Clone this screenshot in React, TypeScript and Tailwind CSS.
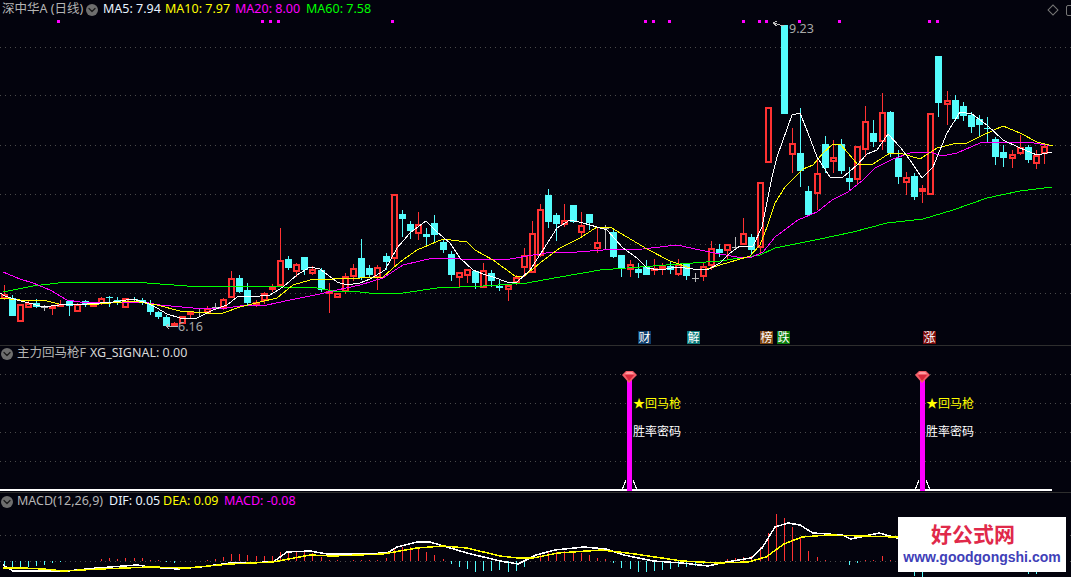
import { ChevronDown } from "lucide-react";

type Kind = "up" | "down" | "cross" | "grey";
type Candle = [number, number, number, number, Kind] | null;
type Point = [number, number];

const BG = "#03030d";
const RED = "#ff3232";
const CYAN = "#54fcfc";

// [body top, body bottom, wick top, wick bottom, kind]
const CANDLES: Candle[] = [
  [294, 298, 285, 300, "up"],
  [298, 316, 295, 316, "down"],
  [304, 321, 304, 321, "up"],
  [303, 307, 301, 308, "up"],
  [303, 307, 299, 308, "down"],
  [307, 307, 305, 311, "grey"],
  [306, 308, 305, 315, "up"],
  [304, 305, 300, 307, "up"],
  [301, 306, 300, 316, "down"],
  [304, 311, 303, 312, "up"],
  [301, 305, 300, 307, "down"],
  [304, 305, 303, 307, "up"],
  [298, 303, 297, 305, "up"],
  [297, 298, 296, 307, "down"],
  [300, 302, 297, 305, "down"],
  [298, 307, 298, 307, "up"],
  [299, 300, 297, 302, "down"],
  [300, 302, 298, 305, "down"],
  [304, 312, 300, 315, "down"],
  [312, 317, 311, 319, "down"],
  [317, 326, 315, 327, "down"],
  [323, 326, 322, 327, "up"],
  [316, 323, 316, 324, "up"],
  [312, 313, 312, 318, "up"],
  [312, 312, 308, 316, "grey"],
  [308, 312, 306, 313, "up"],
  [307, 307, 303, 310, "grey"],
  [299, 307, 298, 310, "up"],
  [278, 297, 271, 298, "up"],
  [278, 292, 275, 293, "down"],
  [290, 303, 283, 305, "down"],
  [302, 303, 300, 307, "up"],
  [293, 300, 292, 304, "up"],
  [286, 289, 284, 292, "up"],
  [260, 285, 228, 287, "up"],
  [259, 268, 256, 270, "down"],
  [264, 271, 263, 277, "up"],
  [257, 270, 257, 275, "down"],
  [269, 273, 266, 275, "up"],
  [270, 290, 268, 292, "down"],
  [291, 293, 283, 313, "up"],
  [293, 297, 293, 298, "up"],
  [276, 291, 273, 294, "up"],
  [268, 276, 264, 281, "up"],
  [258, 278, 239, 280, "down"],
  [268, 275, 265, 277, "down"],
  [267, 277, 265, 290, "up"],
  [256, 262, 253, 270, "down"],
  [194, 258, 194, 267, "up"],
  [214, 219, 210, 237, "down"],
  [224, 231, 221, 239, "down"],
  [224, 233, 212, 240, "up"],
  [234, 237, 228, 245, "down"],
  [223, 235, 215, 243, "down"],
  [242, 250, 239, 253, "down"],
  [254, 275, 251, 281, "down"],
  [272, 277, 272, 287, "up"],
  [269, 275, 269, 283, "up"],
  [271, 283, 270, 289, "down"],
  [270, 287, 263, 287, "up"],
  [273, 281, 270, 287, "down"],
  [286, 288, 279, 291, "down"],
  [285, 289, 285, 301, "up"],
  [277, 282, 275, 285, "up"],
  [255, 267, 248, 277, "up"],
  [233, 272, 221, 273, "up"],
  [209, 255, 204, 257, "up"],
  [195, 222, 189, 228, "down"],
  [215, 224, 213, 241, "down"],
  [220, 224, 204, 227, "up"],
  [205, 222, 205, 223, "down"],
  [225, 232, 212, 238, "up"],
  [214, 223, 214, 230, "down"],
  [242, 248, 227, 253, "up"],
  [228, 228, 225, 249, "grey"],
  [232, 257, 230, 258, "down"],
  [255, 269, 255, 277, "down"],
  [264, 269, 260, 277, "up"],
  [269, 273, 263, 278, "down"],
  [266, 275, 260, 275, "down"],
  [268, 270, 259, 275, "up"],
  [265, 268, 263, 275, "up"],
  [266, 270, 262, 274, "down"],
  [264, 274, 259, 276, "up"],
  [264, 276, 263, 280, "down"],
  [278, 278, 273, 282, "grey"],
  [266, 276, 263, 281, "up"],
  [248, 265, 241, 270, "up"],
  [249, 253, 244, 257, "down"],
  [244, 250, 244, 260, "up"],
  [247, 247, 237, 250, "grey"],
  [233, 244, 218, 245, "up"],
  [237, 250, 234, 255, "down"],
  [182, 247, 182, 254, "up"],
  [107, 162, 107, 163, "up"],
  null,
  [25, 114, 25, 114, "down"],
  [143, 154, 128, 173, "up"],
  [153, 171, 108, 187, "down"],
  [191, 215, 186, 215, "down"],
  [173, 193, 157, 210, "up"],
  [144, 168, 136, 173, "down"],
  [157, 161, 140, 173, "up"],
  [144, 171, 139, 174, "down"],
  [178, 182, 167, 190, "down"],
  [146, 179, 146, 184, "up"],
  [121, 149, 106, 157, "up"],
  [133, 142, 120, 147, "down"],
  [112, 141, 93, 150, "up"],
  [112, 153, 111, 157, "down"],
  [158, 177, 150, 184, "down"],
  [177, 182, 172, 195, "up"],
  [176, 197, 173, 200, "down"],
  [188, 191, 185, 203, "up"],
  [113, 194, 113, 194, "up"],
  [56, 103, 56, 117, "down"],
  [100, 104, 91, 125, "up"],
  [100, 119, 95, 121, "down"],
  [106, 116, 102, 121, "down"],
  [115, 127, 112, 133, "down"],
  [119, 125, 115, 136, "down"],
  [128, 128, 117, 142, "cross"],
  [139, 157, 137, 165, "down"],
  [152, 158, 145, 167, "down"],
  [154, 158, 150, 168, "up"],
  [147, 153, 135, 155, "up"],
  [147, 160, 145, 163, "down"],
  [155, 163, 150, 169, "up"],
  [146, 153, 145, 164, "up"],
];

const MA5: Point[] = [
  [0, 293], [5, 296], [17, 300], [33, 304], [43, 307], [67, 304], [87, 304], [113, 302], [133, 299], [147, 303],
  [157, 308], [167, 314], [180, 318], [197, 318], [213, 310], [227, 305], [237, 297], [260, 296], [270, 295],
  [283, 287], [297, 275], [310, 267], [320, 269], [337, 282], [347, 285], [360, 283], [370, 279], [385, 270],
  [397, 248], [410, 233], [426, 221], [437, 232], [450, 243], [460, 258], [473, 270], [483, 274], [493, 277],
  [507, 282], [517, 282], [530, 270], [543, 250], [557, 228], [570, 220], [583, 223], [597, 227], [607, 230],
  [623, 248], [637, 258], [647, 268], [660, 270], [677, 267], [693, 269], [707, 270], [720, 263], [730, 253],
  [740, 246], [753, 246], [762, 227], [772, 177], [777, 157], [792, 115], [800, 113], [808, 133], [817, 157],
  [830, 177], [842, 178], [857, 165], [867, 154], [877, 150], [888, 134], [900, 147], [910, 160], [922, 178],
  [933, 167], [947, 133], [960, 112], [972, 114], [987, 125], [1003, 140], [1020, 148], [1037, 155], [1052, 152],
];

const MA10: Point[] = [
  [0, 298], [20, 300], [43, 300], [63, 305], [100, 304], [133, 301], [157, 305], [180, 311], [207, 313],
  [223, 313], [240, 307], [260, 302], [277, 298], [293, 285], [310, 280], [333, 279], [360, 278], [383, 277],
  [400, 262], [417, 250], [443, 239], [467, 242], [475, 250], [493, 260], [515, 276], [523, 277], [540, 263],
  [560, 248], [580, 238], [597, 227], [610, 227], [627, 237], [647, 249], [670, 261], [693, 269], [707, 269],
  [720, 265], [737, 260], [750, 256], [760, 245], [767, 227], [775, 203], [785, 187], [803, 169], [813, 165],
  [823, 153], [833, 144], [840, 144], [848, 153], [858, 165], [873, 164], [890, 153], [900, 153], [920, 159],
  [937, 148], [953, 144], [967, 143], [983, 135], [1003, 126], [1020, 133], [1037, 142], [1053, 146],
];

const MA20: Point[] = [
  [3, 272], [20, 279], [33, 283], [50, 290], [67, 300], [80, 302], [100, 302], [143, 302], [160, 305], [193, 308],
  [227, 308], [240, 306], [267, 305], [290, 300], [320, 294], [337, 290], [360, 285], [383, 278], [403, 265],
  [433, 258], [460, 259], [510, 259], [533, 255], [553, 252], [577, 252], [603, 250], [643, 249], [677, 245],
  [700, 250], [720, 254], [737, 257], [750, 258], [763, 252], [775, 237], [798, 220], [817, 212], [832, 200],
  [848, 192], [863, 180], [875, 168], [893, 159], [913, 152], [933, 153], [942, 156], [957, 153], [980, 143],
  [1003, 142], [1027, 142], [1053, 146],
];

const MA60: Point[] = [
  [3, 292], [33, 286], [67, 282], [133, 282], [187, 286], [260, 286], [283, 287], [317, 288], [333, 291],
  [360, 292], [377, 294], [403, 293], [437, 288], [483, 286], [527, 283], [560, 277], [600, 270], [640, 267],
  [693, 263], [720, 261], [740, 258], [760, 255], [775, 248], [820, 239], [853, 232], [887, 223], [923, 219],
  [953, 210], [987, 198], [1020, 191], [1052, 187],
];

const DIF: Point[] = [
  [3, 565], [13, 571], [43, 571], [67, 571], [97, 568], [137, 565], [150, 567], [177, 569], [200, 567], [230, 563],
  [273, 562], [287, 552], [310, 551], [327, 554], [350, 554], [387, 553], [397, 547], [417, 542], [430, 542],
  [447, 547], [467, 553], [500, 561], [518, 564], [536, 555], [555, 550], [584, 547], [606, 549], [624, 555],
  [653, 561], [682, 563], [708, 566], [726, 562], [751, 558], [762, 548], [775, 527], [788, 523], [800, 525],
  [813, 533], [842, 535], [851, 539], [879, 533], [897, 538], [920, 536],
];

const DEA: Point[] = [
  [3, 568], [23, 568], [43, 569], [63, 571], [100, 569], [150, 567], [187, 568], [230, 564], [273, 562], [310, 555],
  [333, 556], [383, 554], [417, 548], [443, 546], [467, 548], [500, 556], [518, 558], [533, 558], [558, 553],
  [602, 550], [635, 554], [682, 561], [718, 563], [748, 562], [766, 557], [784, 544], [802, 537], [828, 535],
  [897, 537], [920, 537],
];

// height of each histogram bar in px, + red above zero, - cyan below
const MACD_BARS = [
  -6, -6, -6, -6, -5, -4, -2, -1, 0, 0, 0, 0, 2, 3, 2, 3, 3, 3, 1, 1, -1, -2, 0, 0, 0, 1, 2, 4, 7, 7, 6, 5, 5, 5, 9,
  10, 10, 9, 8, 4, 1, 1, 0, 1, 1, 1, 1, 3, 12, 14, 14, 12, 9, 6, 2, -3, -6, -8, -11, -10, -10, -9, -11, -10, -6, 0,
  6, 9, 9, 10, 9, 8, 6, 3, 2, -2, -7, -8, -11, -11, -10, -9, -8, -6, -6, -5, -3, 0, 0, 2, 3, 4, 5, 14, 28, 47, 43,
  34, 24, 10, 4, 1, 0, 0, -4, -2, 1, 1, 5, 1, -5, -10, -15, -16, -10, 0, 0, 0, 0, 0, 0, 0, 0, 0, 0, 0, -13, -13,
];

const SIGNAL_DOTS = [58, 262, 270, 278, 392, 645, 653, 669, 743, 759, 766, 799, 839, 929, 937];
const PRICE_GRID = [47, 95, 145, 194, 244, 293];
const SIGNAL_GRID = [374, 403, 432, 461];
const MACD_GRID = [535, 561];
const SIGNAL_BARS = [630, 923];

const BADGES = [
  { left: 638, label: "财", color: "bg-[#0d3d6b]" },
  { left: 687, label: "解", color: "bg-[#0b7b7b]" },
  { left: 760, label: "榜", color: "bg-[#7e4510]" },
  { left: 777, label: "跌", color: "bg-[#0b7b0b]" },
  { left: 923, label: "涨", color: "bg-[#7a0a0a]" },
];

const candleX = (i: number) => Math.round(3.5 + 8.13 * i);
const toPoints = (pts: Point[]) => pts.map(([x, y]) => `${x},${y}`).join(" ");

const Collapse = () => (
  <span className="flex h-3 w-3 shrink-0 items-center justify-center rounded-full bg-[#6e6e6e]">
    <ChevronDown className="h-3 w-3 text-[#1a1a1a]" strokeWidth={2.5} />
  </span>
);

const Line = ({ points, color, width = 1 }: { points: Point[]; color: string; width?: number }) => (
  <polyline points={toPoints(points)} fill="none" stroke={color} strokeWidth={width} />
);

const Grid = ({ rows }: { rows: number[] }) => (
  <>
    {rows.map((y) => (
      <line key={y} x1={0} x2={1071} y1={y + 0.5} y2={y + 0.5} stroke="#4a4a4a" strokeDasharray="1 4" />
    ))}
  </>
);

const CandleMark = ({ candle, i }: { candle: NonNullable<Candle>; i: number }) => {
  const [top, bottom, wickTop, wickBottom, kind] = candle;
  const x = candleX(i);
  if (kind === "cross" || kind === "grey") {
    const color = kind === "cross" ? CYAN : "#b8b8b8";
    return (
      <g stroke={color}>
        <line x1={x + 0.5} x2={x + 0.5} y1={wickTop} y2={wickBottom} />
        <line x1={x - 3} x2={x + 4} y1={top + 0.5} y2={top + 0.5} />
      </g>
    );
  }
  if (kind === "down") {
    return (
      <g>
        <line x1={x + 0.5} x2={x + 0.5} y1={wickTop} y2={wickBottom} stroke={CYAN} />
        <rect x={x - 3} y={top} width={7} height={bottom - top} fill={CYAN} />
      </g>
    );
  }
  return (
    <g>
      <line x1={x + 0.5} x2={x + 0.5} y1={wickTop} y2={wickBottom} stroke={RED} strokeWidth={1.5} />
      <rect x={x - 2} y={top + 1} width={5} height={Math.max(bottom - top - 1, 1)} fill={BG} stroke={RED} strokeWidth={2} />
    </g>
  );
};

const PriceChart = () => (
  <svg className="block h-[326px] w-full" viewBox="0 19 1071 326" shapeRendering="crispEdges">
    <Grid rows={PRICE_GRID} />
    {SIGNAL_DOTS.map((x) => (
      <rect key={x} x={x - 1} y={20} width={3} height={3} fill="#ff00ff" />
    ))}
    {CANDLES.map((candle, i) => candle && <CandleMark key={i} candle={candle} i={i} />)}
    <Line points={MA60} color="#00ff00" />
    <Line points={MA20} color="#ff00ff" />
    <Line points={MA10} color="#ffff00" />
    <Line points={MA5} color="#ffffff" />
    <g stroke="#c0c0c0" fill="none">
      <path d="M773 23 L784 26 M773 23 L777 21 M773 23 L777 26" />
      <path d="M178 326 L166 326 M166 326 L169 324 M166 326 L169 329" />
    </g>
  </svg>
);

const SignalChart = () => (
  <svg className="block h-[145px] w-full" viewBox="0 346 1071 145" shapeRendering="crispEdges">
    <Grid rows={SIGNAL_GRID} />
    <line x1={0} x2={1052} y1={490} y2={490} stroke="#ffffff" strokeWidth={1.5} />
    {SIGNAL_BARS.map((x) => (
      <g key={x}>
        <rect x={x - 3} y={378} width={5} height={113} fill="#ff00ff" />
        <path d={`M${x - 8} 490 L${x - 4} 480 M${x + 3} 480 L${x + 7} 490`} stroke="#ffffff" fill="none" />
        <g shapeRendering="auto">
          <path d={`M${x - 4} 371 L${x + 3} 371 L${x + 7} 375 L${x - 1} 383 L${x - 8} 375 Z`} fill="#f25c66" />
          <path d={`M${x - 5} 375 L${x + 4} 375 L${x - 1} 381 Z`} fill="#d8283c" />
          <path d={`M${x - 3} 372 L${x + 2} 372 L${x + 4} 374 L${x - 5} 374 Z`} fill="#ff9aa0" />
        </g>
      </g>
    ))}
  </svg>
);

const MacdChart = () => (
  <svg className="block h-[67px] w-full" viewBox="0 510 1071 67" shapeRendering="crispEdges">
    <Grid rows={MACD_GRID} />
    {MACD_BARS.map((value, i) =>
      value === 0 ? null : (
        <line
          key={i}
          x1={candleX(i) + 0.5}
          x2={candleX(i) + 0.5}
          y1={561}
          y2={561 - value}
          stroke={value > 0 ? RED : CYAN}
          strokeWidth={1.5}
        />
      ),
    )}
    <Line points={DIF} color="#ffffff" width={1.5} />
    <Line points={DEA} color="#ffff00" width={1.5} />
  </svg>
);

const App = () => (
  <div className="relative h-[577px] w-[1071px] overflow-hidden bg-[#03030d] font-['Noto_Sans','Noto_Sans_CJK_SC',sans-serif] text-[12.5px] leading-none text-[#b4b4b4]">
    <section className="relative h-[345px]">
      <header className="flex h-[19px] items-center pl-[2px]">
        <span className="w-[84px]">深中华A (日线)</span>
        <Collapse />
        <span className="ml-[5px] w-[62px] text-[#e8f4ff]">MA5: 7.94</span>
        <span className="w-[70px] text-[#ffff00]">MA10: 7.97</span>
        <span className="w-[71px] text-[#ff00ff]">MA20: 8.00</span>
        <span className="text-[#00ff00]">MA60: 7.58</span>
      </header>
      <PriceChart />

      <span className="absolute left-[789px] top-[23px] text-[12.5px] text-[#a8a8a8]">9.23</span>
      <span className="absolute left-[178px] top-[321px] text-[12.5px] text-[#a8a8a8]">6.16</span>
      {BADGES.map((badge) => (
        <span
          key={badge.label}
          className={`absolute top-[331px] flex h-[13px] w-[13px] items-center justify-center text-[12px] text-white ${badge.color}`}
          style={{ left: badge.left }}
        >
          {badge.label}
        </span>
      ))}
      <span className="absolute left-[1048px] top-[5px] h-[8px] w-[8px] translate-x-[1px] translate-y-[1px] rotate-45 border border-[#777]" />
      <span className="absolute left-[1066px] top-[5px] h-[11px] w-[11px] rounded-[2px] border border-[#777]" />
    </section>

    <section className="relative h-[147px] border-t border-[#2e2e2e]">
      <header className="absolute left-[1px] top-0 flex h-[15px] items-center gap-[4px]">
        <Collapse />
        <span>主力回马枪F</span>
        <span className="text-[#d8d8d8]">XG_SIGNAL: 0.00</span>
      </header>
      <SignalChart />

      {SIGNAL_BARS.map((x) => (
        <div key={x} className="absolute flex flex-col gap-[16px] text-[12px]" style={{ left: x + 3, top: 52 }}>
          <span className="text-[#ffff00]">★回马枪</span>
          <span className="text-white">胜率密码</span>
        </div>
      ))}
    </section>

    <section className="relative h-[85px] border-t border-[#2e2e2e]">
      <header className="flex h-[17px] items-center pl-[1px]">
        <Collapse />
        <span className="ml-[4px] w-[92px]">MACD(12,26,9)</span>
        <span className="w-[54px] text-[#e8f4ff]">DIF: 0.05</span>
        <span className="w-[61px] text-[#ffff00]">DEA: 0.09</span>
        <span className="text-[#ff00ff]">MACD: -0.08</span>
      </header>
      <MacdChart />
    </section>

    <div className="absolute left-[898px] top-[517px] flex h-[55px] w-[168px] flex-col items-center bg-white pt-[7px]">
      <span className="mr-[18px] text-[21px] font-bold text-[#e0294a]">好公式网</span>
      <span className="mt-[5px] font-['Liberation_Sans',sans-serif] text-[14px] font-bold text-[#4040b8]">
        www.goodgongshi.com
      </span>
    </div>
  </div>
);

export default App;
